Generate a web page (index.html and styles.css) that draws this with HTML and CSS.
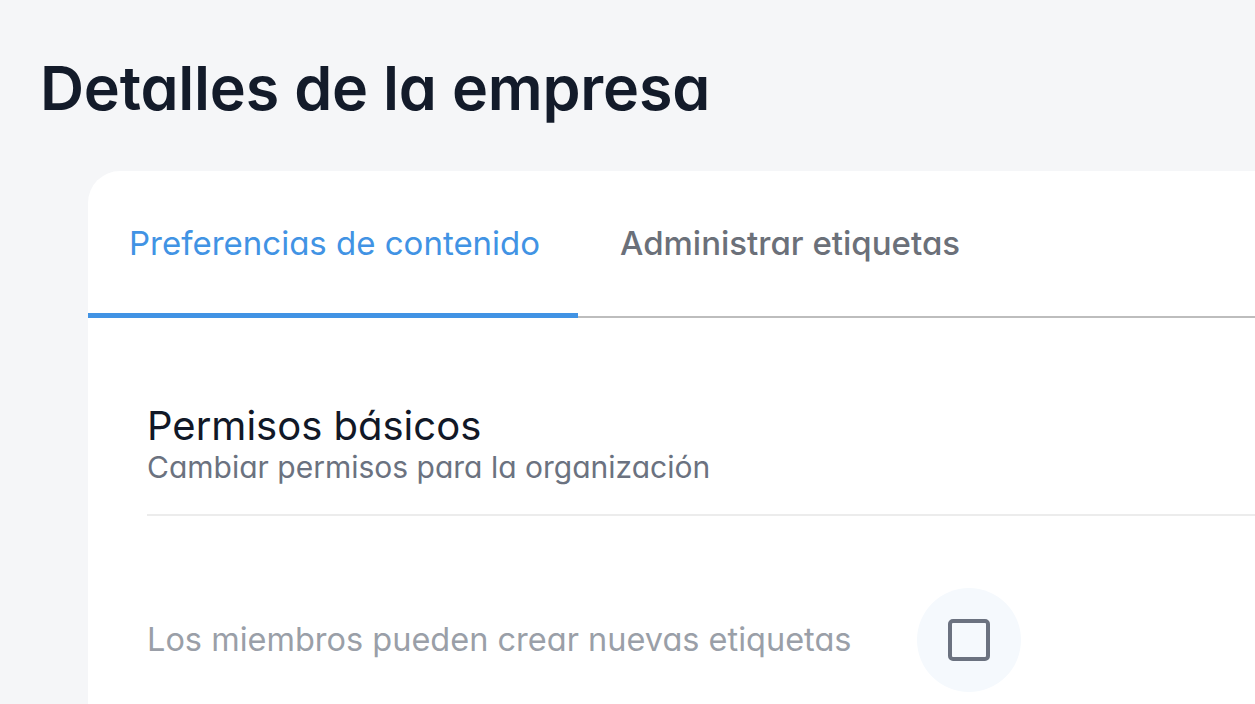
FILE: index.html
```html
<!DOCTYPE html>
<html lang="es">
<head>
<meta charset="utf-8">
<title>Detalles de la empresa</title>
<link rel="stylesheet" href="styles.css">
</head>
<body>
<main class="page">
  <h1 class="page-title">Detalles de la empresa</h1>
  <section class="card">
    <nav class="tabs">
      <div class="tab tab-active">Preferencias de contenido</div>
      <div class="tab">Administrar etiquetas</div>
    </nav>
    <div class="card-body">
      <div class="section-head">
        <h2 class="section-title">Permisos básicos</h2>
        <p class="section-sub">Cambiar permisos para la organización</p>
      </div>
      <div class="row">
        <span class="row-label">Los miembros pueden crear nuevas etiquetas</span>
        <span class="check-wrap"><span class="check"></span></span>
      </div>
    </div>
  </section>
</main>
</body>
</html>
```

FILE: styles.css
```css
* { box-sizing: border-box; }
html, body { margin: 0; padding: 0; }
body {
  background: #f5f6f8;
  font-family: "Inter", "Noto Sans", sans-serif;
  font-feature-settings: "cv11" 1;
  overflow: hidden;
  width: 1255px;
  height: 704px;
}
.page {
  padding: 48px 0 0 40px;
  height: 704px;
  display: flex;
  flex-direction: column;
}
.page-title {
  margin: 0;
  font-size: 61px;
  line-height: 80px;
  font-weight: 600;
  color: #131b2a;
  letter-spacing: -0.2px;
}
.card {
  margin: 43px 0 0 48px;
  background: #ffffff;
  border-radius: 32px 0 0 0;
  flex: 1;
  overflow: hidden;
}
.tabs {
  display: flex;
  border-bottom: 2px solid #bdbdbd;
  height: 147px;
}
.tab {
  padding: 52px 42px 0 42px;
  font-size: 33px;
  line-height: 40px;
  color: #6b7079;
  font-weight: 500;
  white-space: nowrap;
}
.tab-active {
  padding-left: 41px;
  color: #4193e4;
  font-weight: 400;
  border-bottom: 5px solid #4193e4;
  margin-bottom: -2px;
  width: 490px;
}
.card-body {
  padding: 86px 0 0 59px;
}
.section-head {
  border-bottom: 2px solid #ececec;
  padding-bottom: 28px;
}
.section-title {
  margin: 0;
  font-size: 40px;
  line-height: 44px;
  font-weight: 400;
  color: #111827;
}
.section-sub {
  margin: 0;
  font-size: 30px;
  line-height: 38px;
  color: #6b7280;
}
.row {
  display: flex;
  align-items: center;
  margin-top: 72px;
}
.row-label {
  font-size: 32.5px;
  line-height: 40px;
  color: #9a9fa8;
  width: 770px;
}
.check-wrap {
  width: 104px;
  height: 104px;
  border-radius: 50%;
  background: #f5f9fd;
  display: flex;
  align-items: center;
  justify-content: center;
}
.check {
  width: 42px;
  height: 42px;
  border: 4px solid #6b7280;
  border-radius: 5px;
}
```
